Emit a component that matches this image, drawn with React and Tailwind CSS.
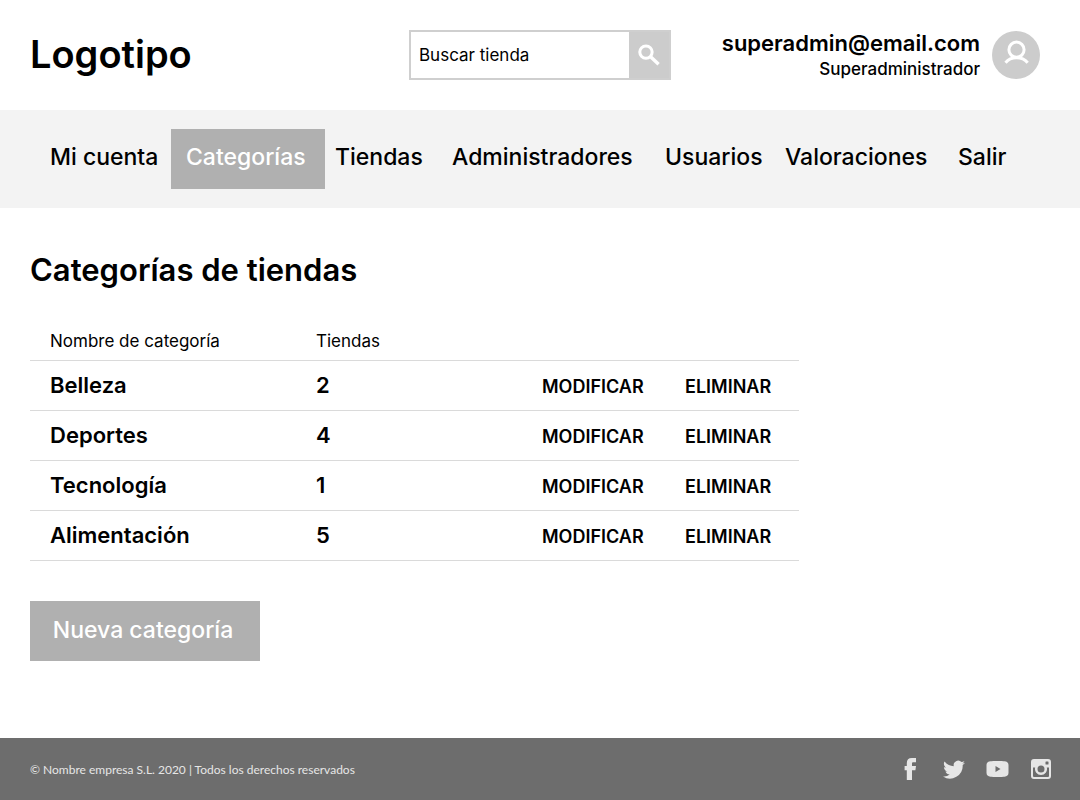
const navItems = ["Mi cuenta", "Categorías", "Tiendas", "Administradores", "Usuarios", "Valoraciones", "Salir"];

const categories = [
  { name: "Belleza", stores: 2 },
  { name: "Deportes", stores: 4 },
  { name: "Tecnología", stores: 1 },
  { name: "Alimentación", stores: 5 },
];

function SearchIcon() {
  return (
    <svg viewBox="0 0 24 24" className="size-7" fill="none" stroke="currentColor" aria-hidden="true">
      <circle cx="9.400" cy="9.500" r="5.300" strokeWidth="2.600" />
      <path d="M13.400 13.500l6.800 6.500" strokeWidth="2.900" />
    </svg>
  );
}

function Avatar() {
  return (
    <svg viewBox="0 0 48 48" className="size-12" fill="none" aria-hidden="true">
      <circle cx="24" cy="24" r="24" fill="#cccccc" />
      <circle cx="24.500" cy="18.700" r="7.600" stroke="#fff" strokeWidth="3" />
      <path d="M13.500 31.800C19 25.200 30 25.200 35.700 31.800" stroke="#fff" strokeWidth="3" />
    </svg>
  );
}

const socials = [
  {
    label: "Facebook",
    icon: <path d="M19 1v4.200h-2.600c-1 0-1.400.5-1.400 1.300V9h4l-.6 4.200H15V23h-5.200v-9.800H7.600V9h2.200V6.200C9.800 2.900 11.500 1 14.800 1z" />,
  },
  {
    label: "Twitter",
    icon: <path d="M24 5.800c-.8.400-1.700.6-2.600.7.900-.6 1.600-1.400 2-2.500-.9.500-1.800.9-2.900 1.100a4.500 4.500 0 0 0-7.700 4.100C9 9 5.700 7.200 3.500 4.500c-1.200 2-.6 4.700 1.400 6-.7 0-1.400-.2-2-.6 0 2.200 1.500 4.100 3.600 4.500-.7.2-1.400.2-2 .1.600 1.800 2.300 3.100 4.200 3.100A9.100 9.100 0 0 1 2 19.500 12.800 12.800 0 0 0 21.700 8.100c.9-.6 1.700-1.400 2.300-2.300z" />,
  },
  {
    label: "YouTube",
    icon: <path fillRule="evenodd" d="M5.500 4.200C7.500 3.900 17.500 3.900 19.500 4.200c2.500.3 4 1.500 4 4v7.600c0 2.500-1.500 3.700-4 4-2 .3-12 .3-14 0-2.500-.3-4-1.500-4-4V8.200c0-2.500 1.500-3.700 4-4zM10.500 9v6l5-3z" />,
  },
  {
    label: "Instagram",
    icon: (
      <path
        fillRule="evenodd"
        d="M5 2h14a3 3 0 0 1 3 3v14a3 3 0 0 1-3 3H5a3 3 0 0 1-3-3V5a3 3 0 0 1 3-3zM17 4.500a.5.500 0 0 0-.5.500v2a.5.500 0 0 0 .5.500h2a.5.500 0 0 0 .5-.5V5a.5.500 0 0 0-.5-.5zM4 10.500V19a1 1 0 0 0 1 1h14a1 1 0 0 0 1-1v-8.500h-2.200a6 6 0 1 1-11.600 0zM12 8.500a3.500 3.500 0 1 0 0 7 3.500 3.500 0 0 0 0-7z"
      />
    ),
  },
];

export default function App() {
  return (
    <div className="flex min-h-screen flex-col bg-white font-['Inter',sans-serif] text-black">
      <header className="flex h-[110px] items-center justify-between pr-10 pl-[30px]">
        <a href="#inicio" className="w-[379px] shrink-0 pb-0.5 text-[38px] font-semibold">Logotipo</a>
        <form role="search" className="flex h-[50px] w-[262px] shrink-0 border-2 border-[#cfcfcf]">
          <input
            type="search"
            aria-label="Buscar tienda"
            placeholder="Buscar tienda"
            className="min-w-0 flex-1 px-2 pt-0.5 text-[17px] outline-none placeholder:text-black"
          />
          <button type="button" aria-label="Buscar" className="flex w-10 items-center justify-center bg-[#cccccc] text-white">
            <SearchIcon />
          </button>
        </form>
        <div className="flex flex-1 items-center justify-end gap-3">
          <div className="text-right">
            <p className="text-[22px] leading-7 font-semibold">superadmin@email.com</p>
            <p className="text-[17px] leading-6 font-medium">Superadministrador</p>
          </div>
          <Avatar />
        </div>
      </header>

      <nav className="bg-[#f3f3f3] px-[50px] py-[19px]">
        <ul className="grid grid-cols-[121fr_164fr_117fr_213fr_120fr_173fr_72fr] text-[23px] font-medium">
          {navItems.map((item) => (
            <li key={item} className="flex">
              <a
                href="#"
                aria-current={item === "Categorías" ? "page" : undefined}
                className={
                  item === "Categorías"
                    ? "flex h-[60px] w-[154px] items-center bg-[#b0b0b0] px-[15px] pb-1 text-white"
                    : "flex h-[60px] items-center pb-1"
                }
              >
                {item}
              </a>
            </li>
          ))}
        </ul>
      </nav>

      <main className="flex-1 px-[30px] pt-11">
        <h1 className="text-[31px] leading-9 font-semibold">Categorías de tiendas</h1>
        <table className="mt-8 w-full max-w-[769px] table-fixed border-collapse text-left">
          <colgroup>
            <col className="w-[286px]" />
            <col className="w-[226px]" />
            <col className="w-[143px]" />
            <col />
          </colgroup>
          <thead>
            <tr className="h-10 border-b border-[#dadada] text-[17px]">
              <th className="pt-1 pl-5 font-normal">Nombre de categoría</th>
              <th className="pt-1 font-normal">Tiendas</th>
              <td />
              <td />
            </tr>
          </thead>
          <tbody>
            {categories.map((category) => (
              <tr key={category.name} className="h-[50px] border-b border-[#dadada] font-semibold">
                <td className="pl-5 text-[22px]">{category.name}</td>
                <td className="text-[22px]">{category.stores}</td>
                <td className="pt-1"><button type="button" className="block text-lg">MODIFICAR</button></td>
                <td className="pt-1"><button type="button" className="block text-lg">ELIMINAR</button></td>
              </tr>
            ))}
          </tbody>
        </table>
        <button type="button" className="mt-10 h-[60px] w-[230px] bg-[#b0b0b0] pr-1 text-[23px] font-medium text-white">
          Nueva categoría
        </button>
      </main>

      <footer className="flex h-[62px] items-center justify-between bg-[#6d6d6d] pr-[27px] pl-[30px] text-[#e6e6e6]">
        <p className="pt-0.5 font-['Lato',sans-serif] text-xs">© Nombre empresa S.L. 2020 | Todos los derechos reservados</p>
        <ul className="flex gap-5">
          {socials.map(({ label, icon }) => (
            <li key={label}>
              <a href="#" aria-label={label}>
                <svg viewBox="0 0 24 24" className="size-6" fill="currentColor" aria-hidden="true">{icon}</svg>
              </a>
            </li>
          ))}
        </ul>
      </footer>
    </div>
  );
}
